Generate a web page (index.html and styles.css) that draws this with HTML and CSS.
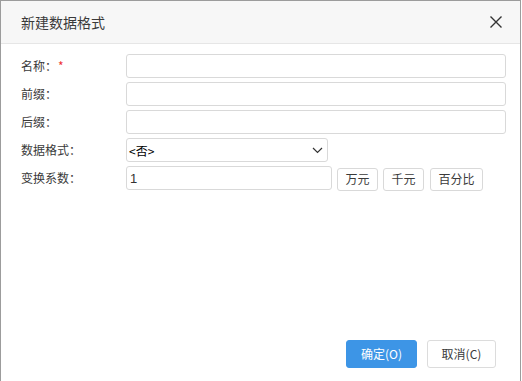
FILE: index.html
```html
<!DOCTYPE html>
<html>
<head>
<meta charset="utf-8">
<link rel="stylesheet" href="styles.css">
</head>
<body>
<div class="dialog">
  <div class="header">
    <span class="title">新建数据格式</span>
    <svg class="close" width="14" height="14" viewBox="0 0 14 14"><path d="M1.5 1.5L12.5 12.5M12.5 1.5L1.5 12.5" stroke="#333" stroke-width="1.4" fill="none"/></svg>
  </div>
  <div class="form">
    <div class="label">名称：<span class="req">*</span></div>
    <div class="input wide"></div>
    <div class="label">前缀：</div>
    <div class="input wide"></div>
    <div class="label">后缀：</div>
    <div class="input wide"></div>
    <div class="label">数据格式：</div>
    <div class="ctrl">
      <div class="input select"><span>&lt;否&gt;</span>
        <svg width="11" height="7" viewBox="0 0 11 7"><path d="M1 1L5.5 5.5L10 1" stroke="#333" stroke-width="1.2" fill="none"/></svg>
      </div>
    </div>
    <div class="label">变换系数：</div>
    <div class="ctrl units">
      <div class="input factor">1</div>
      <button class="btn w41">万元</button>
      <button class="btn w41">千元</button>
      <button class="btn w53">百分比</button>
    </div>
  </div>
  <div class="footer">
    <button class="btn primary">确定(O)</button>
    <button class="btn cancel">取消(C)</button>
  </div>
</div>
</body>
</html>
```

FILE: styles.css
```css
html, body {
  margin: 0;
  padding: 0;
  background: #fff;
}
body {
  font-family: "Noto Sans CJK SC", "Liberation Sans", sans-serif;
  color: #3a3a3a;
}
.dialog {
  box-sizing: border-box;
  width: 521px;
  height: 381px;
  border: 1px solid #9c9c9c;
  border-bottom: none;
  display: flex;
  flex-direction: column;
}
.header {
  height: 42px;
  background: #f7f7f7;
  border-bottom: 1px solid #e6e6e6;
  display: flex;
  align-items: center;
  justify-content: space-between;
  padding: 0 17px 0 20px;
}
.title {
  font-size: 14px;
  color: #3a3a3a;
  line-height: 20px;
}
.close {
  display: block;
}
.form {
  display: grid;
  grid-template-columns: 105px 1fr;
  grid-auto-rows: 24px;
  row-gap: 4px;
  padding: 10px 14px 0 20px;
  align-items: center;
}
.label {
  font-size: 12px;
  color: #3a3a3a;
  line-height: 16px;
  white-space: nowrap;
}
.req {
  color: #e33;
  font-size: 12px;
  margin-left: 1px;
}
.input {
  box-sizing: border-box;
  height: 24px;
  border: 1px solid #d9d9d9;
  border-radius: 3px;
  background: #fff;
  font-family: "Liberation Sans", "Noto Sans CJK SC", sans-serif;
  font-size: 13px;
  color: #333;
  padding: 0 3px;
  display: flex;
  align-items: center;
}
.ctrl {
  display: flex;
  align-items: center;
  height: 24px;
}
.select {
  width: 202px;
  justify-content: space-between;
  padding: 0 4px 0 2px;
}
.select span {
  font-family: "Noto Sans CJK SC", sans-serif;
  font-size: 12px;
  color: #000;
}
.select svg {
  margin-top: 1px;
}
.factor {
  width: 206px;
}
.units .btn {
  margin-left: 5px;
  height: 23px;
  margin-top: 2px;
}
.units .w53 {
  margin-left: 6px;
}
.btn {
  box-sizing: border-box;
  border: 1px solid #d9d9d9;
  border-radius: 3px;
  background: #fff;
  font-family: "Noto Sans CJK SC", sans-serif;
  font-size: 12px;
  color: #3a3a3a;
  padding: 0;
  line-height: 16px;
}
.w41 { width: 41px; }
.w53 { width: 53px; }
.footer {
  margin-top: auto;
  display: flex;
  justify-content: flex-end;
  gap: 10px;
  padding: 0 24px 13px 0;
}
.footer .btn {
  height: 28px;
}
.primary {
  width: 71px;
  background: #3d95e6;
  border-color: #3d95e6;
  color: #fff;
}
.cancel {
  width: 69px;
  border-color: #dcdcdc;
}
```
